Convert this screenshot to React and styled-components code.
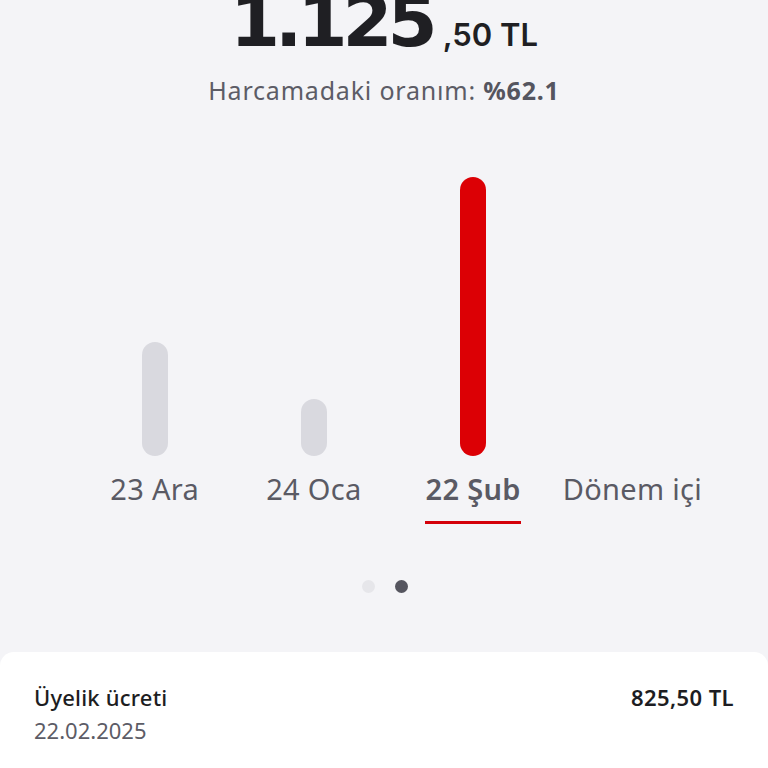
import React from 'react';
import styled, { createGlobalStyle } from 'styled-components';

const GlobalStyle = createGlobalStyle`
  html, body {
    margin: 0;
    padding: 0;
    background: #f4f4f7;
    font-family: "Noto Sans", "Open Sans", sans-serif;
    color: #1d1d22;
  }
  #root {
    overflow: hidden;
    height: 768px;
  }
`;

const periods = [
  { label: '23 Ara', height: 114 },
  { label: '24 Oca', height: 57 },
  { label: '22 Şub', height: 279, active: true },
  { label: 'Dönem içi', height: 0 },
];

function App() {
  return (
    <>
      <GlobalStyle />
      <Page>
        <AmountRow>
          <BigAmount>1.125</BigAmount>
          <SmallAmount>,50 TL</SmallAmount>
        </AmountRow>
        <Ratio>
          Harcamadaki oranım: <strong>%62.1</strong>
        </Ratio>

        <Chart>
          {periods.map((p) => (
            <Column key={p.label}>
              <BarSlot>
                {p.height > 0 && <Bar $active={p.active} style={{ height: p.height }} />}
              </BarSlot>
              <Label $active={p.active}>{p.label}</Label>
              <Underline $active={p.active} />
            </Column>
          ))}
        </Chart>

        <Dots>
          <Dot />
          <Dot $active />
        </Dots>

        <Card>
          <CardRow>
            <CardTitle>Üyelik ücreti</CardTitle>
            <CardAmount>825,50 TL</CardAmount>
          </CardRow>
          <CardDate>22.02.2025</CardDate>
        </Card>
      </Page>
    </>
  );
}

const Page = styled.div`
  display: flex;
  flex-direction: column;
  min-height: 768px;
`;

const AmountRow = styled.div`
  display: flex;
  justify-content: center;
  align-items: baseline;
  gap: 10px;
  margin-top: -15px;
  line-height: 1;
`;

const BigAmount = styled.span`
  font-family: "DejaVu Sans", sans-serif;
  font-weight: 700;
  font-size: 72px;
  letter-spacing: -5px;
  color: #1f1f23;
`;

const SmallAmount = styled.span`
  font-family: Inter, sans-serif;
  font-weight: 600;
  font-size: 31px;
  color: #1f1f23;
`;

const Ratio = styled.div`
  margin-top: 16px;
  text-align: center;
  font-size: 25px;
  color: #5c5c66;
  letter-spacing: 0.8px;

  strong {
    font-weight: 700;
    color: #55555f;
  }
`;

const Chart = styled.div`
  display: grid;
  grid-template-columns: repeat(4, 1fr);
  padding: 0 56px 0 75px;
`;

const Column = styled.div`
  display: flex;
  flex-direction: column;
  align-items: center;
`;

const BarSlot = styled.div`
  height: 349px;
  display: flex;
  align-items: flex-end;
`;

const Bar = styled.div`
  width: 26px;
  border-radius: 13px;
  background: ${(p) => (p.$active ? '#dc0005' : '#d9d9df')};
`;

const Label = styled.div`
  margin-top: 14px;
  font-size: 29px;
  line-height: 38px;
  letter-spacing: 0.3px;
  white-space: nowrap;
  font-weight: ${(p) => (p.$active ? 600 : 400)};
  color: #5a5a64;
`;

const Underline = styled.div`
  margin-top: 13px;
  height: 3px;
  width: 96px;
  background: ${(p) => (p.$active ? '#d4000a' : 'transparent')};
`;

const Dots = styled.div`
  display: flex;
  justify-content: center;
  gap: 20px;
  margin-top: 56px;
  padding-left: 2px;
`;

const Dot = styled.span`
  width: 13px;
  height: 13px;
  border-radius: 50%;
  background: ${(p) => (p.$active ? '#55555f' : '#e6e6ea')};
`;

const Card = styled.div`
  margin-top: 59px;
  flex: 1;
  background: #fff;
  border-radius: 14px 14px 0 0;
  padding: 30px 34px 0 34px;
`;

const CardRow = styled.div`
  display: flex;
  justify-content: space-between;
  align-items: baseline;
`;

const CardTitle = styled.div`
  font-size: 22px;
  font-weight: 500;
  letter-spacing: 0.2px;
  color: #1d1d22;
`;

const CardAmount = styled.div`
  font-size: 22px;
  font-weight: 600;
  letter-spacing: 0.4px;
  color: #1d1d22;
`;

const CardDate = styled.div`
  margin-top: 3px;
  font-size: 22px;
  color: #5c5c66;
`;

export default App;
